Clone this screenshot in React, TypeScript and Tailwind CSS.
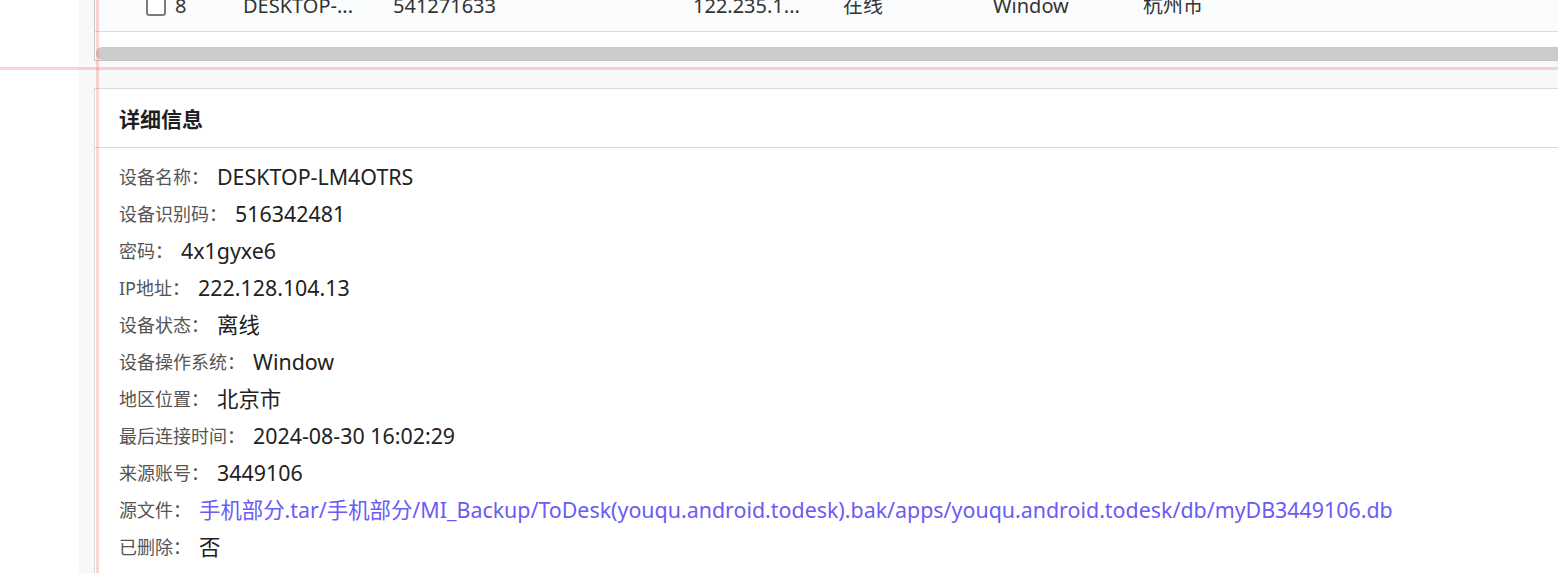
import React from "react";

const rows: { label: string; value: string; link?: boolean }[] = [
  { label: "设备名称：", value: "DESKTOP-LM4OTRS" },
  { label: "设备识别码：", value: "516342481" },
  { label: "密码：", value: "4x1gyxe6" },
  { label: "IP地址：", value: "222.128.104.13" },
  { label: "设备状态：", value: "离线" },
  { label: "设备操作系统：", value: "Window" },
  { label: "地区位置：", value: "北京市" },
  { label: "最后连接时间：", value: "2024-08-30 16:02:29" },
  { label: "来源账号：", value: "3449106" },
  {
    label: "源文件：",
    value:
      "手机部分.tar/手机部分/MI_Backup/ToDesk(youqu.android.todesk).bak/apps/youqu.android.todesk/db/myDB3449106.db",
    link: true,
  },
  { label: "已删除：", value: "否" },
];

export default function App() {
  return (
    <div
      className="relative flex h-[573px] w-[1558px] overflow-hidden bg-white"
      style={{ fontFamily: '"Noto Sans", "Noto Sans CJK SC", sans-serif' }}
    >
      <div className="w-[79px] shrink-0 bg-white" />
      <div className="flex flex-1 flex-col bg-[#f8f8f8] pl-[15px]">
        {/* table panel */}
        <div className="flex flex-col border-l border-b border-[#c4c8cc] bg-white">
          <div className="-mt-[10px] flex h-[42px] items-center border-b border-[#d9dce1] bg-[#fbfcfe] pb-[9px] text-[20px] text-[#333]">
            <div className="flex w-[148px] shrink-0 items-center">
              <div className="ml-[51px] h-[20px] w-[20px] rounded-[3px] border-2 border-[#7a7a7a] bg-white" />
              <span className="ml-[9px]">8</span>
            </div>
            <div className="w-[150px] shrink-0">DESKTOP-...</div>
            <div className="w-[300px] shrink-0">541271633</div>
            <div className="w-[150px] shrink-0">122.235.1...</div>
            <div className="w-[150px] shrink-0">在线</div>
            <div className="w-[150px] shrink-0">Window</div>
            <div className="w-[150px] shrink-0">杭州市</div>
          </div>
          <div className="h-[15px] bg-white" />
          <div className="h-[13px] bg-white pl-[1px]">
            <div className="h-full rounded-l-[6px] bg-[#cbcbcb]" />
          </div>
        </div>

        {/* detail card */}
        <div className="mt-[27px] flex flex-1 flex-col border-l border-t border-[#d9d9d9] bg-white">
          <div className="flex h-[59px] items-center border-b border-[#d9d9d9] px-[24px] pt-[3px]">
            <span className="text-[21px] font-bold text-[#1f1f1f]">详细信息</span>
          </div>
          <div className="flex flex-col px-[24px] pt-[11px]">
            {rows.map((r) => (
              <div key={r.label} className="flex h-[37px] items-center whitespace-nowrap">
                <span className="text-[18px] text-[#555]">{r.label}</span>
                <span
                  className={
                    r.link
                      ? "ml-[8px] text-[21.4px] text-[#6b5bf5]"
                      : "ml-[8px] text-[21.4px] text-[#222]"
                  }
                >
                  {r.value}
                </span>
              </div>
            ))}
          </div>
        </div>
      </div>

      {/* guide overlays */}
      <div className="pointer-events-none absolute left-[96px] top-0 h-full w-[3px] bg-[rgba(240,100,100,0.28)]" />
      <div className="pointer-events-none absolute left-0 top-[67px] h-[3px] w-full bg-[rgba(240,100,100,0.28)]" />
    </div>
  );
}
